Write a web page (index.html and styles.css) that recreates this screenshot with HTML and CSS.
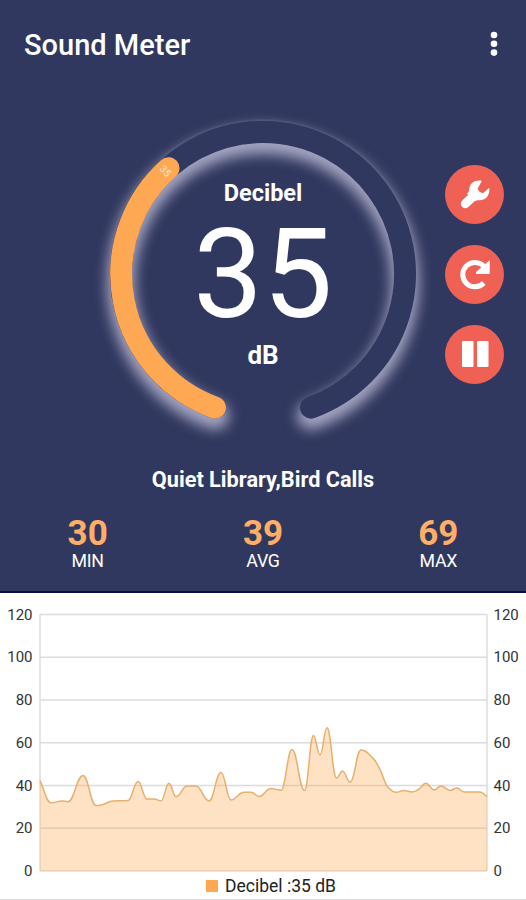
FILE: index.html
```
<!DOCTYPE html>
<html lang="en">
<head>
    <meta charset="UTF-8">
    <title>Sound Meter</title>
    <link rel="stylesheet" href="styles.css">
</head>
<body>
    <div class="app">
        <div class="meter">
            <header class="header">
                <h1 class="title">Sound Meter</h1>
                <button class="menu">
                    <svg width="8" height="26" viewBox="0 0 8 26">
                        <circle cx="4" cy="4" r="3.3"/>
                        <circle cx="4" cy="12.8" r="3.3"/>
                        <circle cx="4" cy="21.6" r="3.3"/>
                    </svg>
                </button>
            </header>

            <div class="gauge-row">
                <div class="gauge">
                    <svg class="gauge-ring" width="346" height="346" viewBox="0 0 346 346">
                        <defs>
                            <filter id="glow" x="-15%" y="-15%" width="130%" height="130%" color-interpolation-filters="sRGB">
                                <feGaussianBlur stdDeviation="6.2"/>
                            </filter>
                        </defs>
                        <path class="glow" filter="url(#glow)" transform="translate(0 8)" d="M125 306.6 A142 142 0 1 1 221 306.6"/>
                        <path class="rim" d="M73 56 A153.5 153.5 0 0 1 322 136"/>
                        <path class="track" d="M125 306.6 A142 142 0 1 1 221 306.6"/>
                        <path class="level" d="M125 306.6 A142 142 0 0 1 78.5 67.2"/>
                        <text class="tip" transform="translate(69 68) rotate(49)">35</text>
                    </svg>
                    <div class="gauge-text">
                        <div class="gauge-label">Decibel</div>
                        <div class="gauge-value">35</div>
                        <div class="gauge-unit">dB</div>
                    </div>
                </div>
                <div class="actions">
                    <button class="action">
                        <svg width="32" height="32" viewBox="0 0 32 32">
                            <path class="handle" d="M6.3 25.7 L15 17.6"/>
                            <path class="fill" d="M22.8 2.9 C17 1.4 10.5 4.7 10.2 11.5 C10.1 13.4 9.4 14.4 8 15.7 L16.2 23.2 C17.3 22.4 18.3 22.2 20 22.3 C26.8 22.6 31.3 17 30.2 9.8 L24.6 14.7 C22.8 15.6 18.6 13.1 18.8 10.2 Z"/>
                        </svg>
                    </button>
                    <button class="action">
                        <svg width="32" height="32" viewBox="0 0 32 32">
                            <path class="stroke" d="M24.8 25 A12.2 12.2 0 1 1 25 8.4"/>
                            <path class="fill" d="M30.7 2.2 V16 H17 V14 Z"/>
                        </svg>
                    </button>
                    <button class="action">
                        <svg width="32" height="32" viewBox="0 0 32 32">
                            <rect class="fill" x="3" y="3" width="11.5" height="26" rx="1"/>
                            <rect class="fill" x="18" y="3" width="11.5" height="26" rx="1"/>
                        </svg>
                    </button>
                </div>
            </div>

            <p class="description">Quiet Library,Bird Calls</p>

            <div class="stats">
                <div class="stat">
                    <div class="stat-value">30</div>
                    <div class="stat-name">MIN</div>
                </div>
                <div class="stat">
                    <div class="stat-value">39</div>
                    <div class="stat-name">AVG</div>
                </div>
                <div class="stat">
                    <div class="stat-value">69</div>
                    <div class="stat-name">MAX</div>
                </div>
            </div>
        </div>

        <div class="history">
            <svg class="chart" id="chart" width="526" height="284" viewBox="0 593 526 284"></svg>
            <div class="legend">
                <span class="legend-box"></span>
                <span class="legend-text">Decibel :35 dB</span>
            </div>
        </div>
    </div>

    <script src="script.js"></script>
</body>
</html>
```

FILE: styles.css
```
* {
    margin: 0;
    padding: 0;
    box-sizing: border-box;
    font-family: Roboto, "Liberation Sans", sans-serif;
}

body {
    background-color: #fff;
}

.app {
    width: 526px;
    height: 900px;
    display: flex;
    flex-direction: column;
    overflow: hidden;
}

.meter {
    height: 593px;
    background-color: #31385f;
    border-bottom: 2px solid #0c0c4b;
    color: #fff;
}

.header {
    height: 101px;
    padding: 27px 28px 0 24px;
    display: flex;
    justify-content: space-between;
    align-items: flex-start;
}

.title {
    font-size: 29px;
    font-weight: 500;
    line-height: 36px;
}

button {
    border: none;
    background: none;
    cursor: pointer;
}

.menu {
    padding-top: 4px;
    line-height: 0;
    fill: #fff;
}

.gauge-row {
    display: grid;
    grid-template-columns: 346px 90px;
    padding-left: 90px;
    height: 346px;
}

.gauge {
    position: relative;
}

.gauge-ring {
    display: block;
    fill: none;
    stroke-linecap: round;
    stroke-width: 22px;
}

.glow {
    stroke: #a3a4c1;
    stroke-width: 28px;
}

.rim {
    stroke: #8f93b8;
    stroke-opacity: 0.12;
    stroke-width: 2px;
}

.track {
    stroke: #31385f;
}

.level {
    stroke: #ffa853;
}

.tip {
    fill: #ffe9cd;
    stroke: none;
    font-size: 10px;
}

.gauge-text {
    position: absolute;
    inset: 0;
    padding-top: 77px;
    text-align: center;
}

.gauge-label {
    font-size: 23.5px;
    font-weight: 700;
    line-height: 30px;
}

.gauge-value {
    padding-top: 3px;
    font-size: 124px;
    line-height: 127px;
}

.gauge-unit {
    font-size: 26px;
    font-weight: 700;
    line-height: 34px;
}

.actions {
    display: flex;
    flex-direction: column;
    align-items: center;
    justify-content: center;
    gap: 21px;
    padding-right: 13px;
}

.action {
    width: 59px;
    height: 59px;
    border-radius: 50%;
    background-color: #ef6055;
    display: flex;
    align-items: center;
    justify-content: center;
}

.fill {
    fill: #fff;
}

.stroke {
    fill: none;
    stroke: #fff;
    stroke-width: 5px;
}

.handle {
    stroke: #fff;
    stroke-width: 9px;
    stroke-linecap: round;
}

.description {
    padding-top: 18px;
    font-size: 21.7px;
    font-weight: 700;
    line-height: 30px;
    text-align: center;
}

.stats {
    display: flex;
    padding-top: 20px;
}

.stat {
    flex: 1;
    text-align: center;
}

.stat-value {
    color: #ffae67;
    font-size: 35px;
    font-weight: 700;
    line-height: 38px;
}

.stat-name {
    font-size: 17.8px;
    letter-spacing: -0.3px;
    line-height: 16px;
}

.history {
    height: 307px;
    border-bottom: 1px solid #ddd;
}

.chart {
    display: block;
    overflow: visible;
}

.grid-line {
    stroke: #dcdcdc;
    stroke-width: 1.5px;
}

.axis-text {
    fill: #333;
    font-size: 15px;
}

.area {
    fill: #ffa853;
    fill-opacity: 0.35;
}

.curve {
    fill: none;
    stroke: #e5b070;
    stroke-width: 1.5px;
}

.legend {
    display: flex;
    justify-content: center;
    align-items: center;
    gap: 7px;
    height: 18px;
    padding-left: 16px;
}

.legend-box {
    width: 12px;
    height: 12px;
    background-color: #ffa853;
}

.legend-text {
    color: #222;
    font-size: 17.5px;
    line-height: 18px;
}
```

FILE: script.js
```
const LEFT = 40;
const RIGHT = 487;
const BOTTOM = 871;
const STEP = 42.75;

// [x, dB]
const samples = [
    [40, 42.3], [51, 31.9], [62, 32.8], [68, 32.4], [83, 44.7],
    [96, 30.6], [102, 31], [113, 32.8], [128, 33], [138, 41.9], [147, 33.7],
    [154, 33.7], [161, 32.8], [169, 41], [176, 34.8], [187, 39.8], [196, 39.8],
    [209, 32.8], [221, 46.1], [231, 33.2], [244, 36.9], [251, 36.9], [259, 34.9],
    [271, 38.6], [281, 37.8], [292, 56.8], [304.5, 37.7], [313.5, 63.4], [320, 54.3],
    [327, 67], [336.5, 43.5], [342.5, 46.8], [350, 41.6], [361, 56.6], [373, 52.8],
    [380, 47.5], [388, 39.2], [396, 36.8], [404, 37.7], [412, 37], [418, 38],
    [426, 41], [434, 37.9], [441, 39.8], [450, 37.7], [457, 38.8], [464, 37],
    [480, 37], [487, 34.8]
];

function toY(db) {
    return BOTTOM - db * STEP / 20;
}

// smooth curve that stays flat on peaks and dips
function curvePath(points) {
    const slopes = points.map((p, i) => {
        if (i === 0 || i === points.length - 1) return null;
        const a = (p[1] - points[i - 1][1]) / (p[0] - points[i - 1][0]);
        const b = (points[i + 1][1] - p[1]) / (points[i + 1][0] - p[0]);
        return a * b <= 0 ? 0 : 2 * a * b / (a + b);
    });
    const last = points.length - 1;
    slopes[0] = (points[1][1] - points[0][1]) / (points[1][0] - points[0][0]);
    slopes[last] = (points[last][1] - points[last - 1][1]) / (points[last][0] - points[last - 1][0]);

    let d = `M${points[0][0]} ${points[0][1]}`;
    for (let i = 1; i < points.length; i++) {
        const [x0, y0] = points[i - 1];
        const [x1, y1] = points[i];
        const h = (x1 - x0) * 0.43;
        d += ` C${x0 + h} ${y0 + slopes[i - 1] * h} ${x1 - h} ${y1 - slopes[i] * h} ${x1} ${y1}`;
    }
    return d;
}

function drawChart() {
    const line = curvePath(samples.map(([x, db]) => [x, toY(db)]));
    let svg = '';
    for (let v = 0; v <= 120; v += 20) {
        const y = toY(v);
        svg += `<line class="grid-line" x1="${LEFT}" x2="${RIGHT}" y1="${y}" y2="${y}"/>`;
        svg += `<text class="axis-text" x="32.5" y="${y + 5}" text-anchor="end">${v}</text>`;
        svg += `<text class="axis-text" x="493.5" y="${y + 5}">${v}</text>`;
    }
    svg += `<line class="grid-line" x1="${LEFT}" x2="${LEFT}" y1="${toY(120)}" y2="${BOTTOM}"/>`;
    svg += `<line class="grid-line" x1="${RIGHT}" x2="${RIGHT}" y1="${toY(120)}" y2="${BOTTOM}"/>`;
    svg += `<path class="area" d="${line} V${BOTTOM} H${LEFT} Z"/>`;
    svg += `<path class="curve" d="${line}"/>`;
    document.getElementById('chart').innerHTML = svg;
}

drawChart();
```
